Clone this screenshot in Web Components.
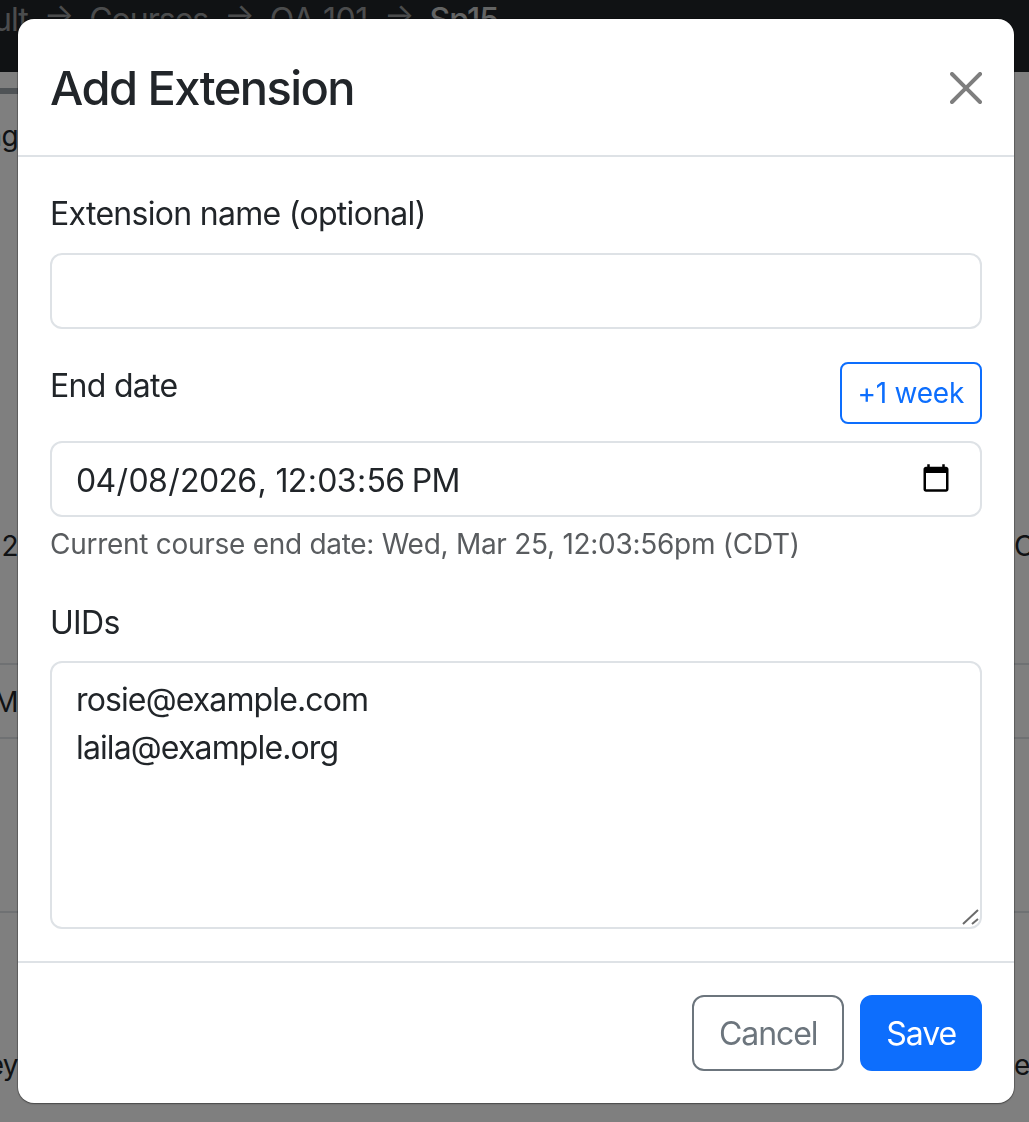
<!DOCTYPE html>
<html lang="en">
<head>
<meta charset="utf-8">
<title>Add Extension</title>
<style>
  html, body { margin: 0; height: 100%; overflow: hidden; background: #fff; }
  body { font: 32px/48px Inter, "Liberation Sans", sans-serif; color: #212529; }
  input::-webkit-calendar-picker-indicator { position: relative; top: -2px; }
</style>
</head>
<body>
<page-behind></page-behind>
<modal-backdrop></modal-backdrop>
<extension-modal>
  <span slot="title">Add Extension</span>
  <form-field label="Extension name (optional)" style="margin-bottom:33px;--label-top:1px">
    <input type="text" aria-label="Extension name">
  </form-field>
  <form-field label="End date" help="Current course end date: Wed, Mar 25, 12:03:56pm (CDT)">
    <ui-button slot="action" variant="small">+1 week</ui-button>
    <input type="datetime-local" step="1" value="2026-04-08T12:03:56" aria-label="End date">
  </form-field>
  <form-field label="UIDs" last grip style="--label-top:2px">
    <textarea rows="5" aria-label="UIDs">rosie@example.com
laila@example.org</textarea>
  </form-field>
  <ui-button slot="footer" variant="cancel">Cancel</ui-button>
  <ui-button slot="footer" variant="save">Save</ui-button>
</extension-modal>

<script>
class PageBehind extends HTMLElement {
  constructor() {
    super();
    this.attachShadow({mode: 'open'}).innerHTML = `
      <style>
        :host { display: block; height: 1122px; overflow: hidden; font: 32px/48px Inter, "Liberation Sans", sans-serif; color: #212529; }
        nav { height: 72px; background: #212529; color: rgba(255,255,255,.55); display: flex; gap: 16px; align-items: flex-start; white-space: nowrap; line-height: 40px; letter-spacing: -1px; overflow: hidden; }
        nav span:first-child { margin-left: -74px; }
        nav span:nth-of-type(3) { letter-spacing: -.4px; }
        nav i { font-style: normal; transform: translateY(-5px); }
        nav b { font-weight: 500; color: rgba(255,255,255,.75); }
        .tabs { height: 16px; background: #fff; }
        .active { height: 6px; width: 60px; background: #9fa6ad; }
        .row { display: grid; grid-template-columns: 18px 1fr 15px; border-bottom: 2px solid #dee2e6; box-sizing: border-box; overflow: hidden; font-size: 28px; line-height: 42px; letter-spacing: -.6px; }
        .row span { white-space: nowrap; display: flex; overflow: hidden; }
        .row span:first-child { justify-content: flex-end; }
      </style>
      <nav><span>Default</span><i>→</i><span>Courses</span><i>→</i><span>QA 101</span><i>→</i><b>Sp15</b></nav>
      <div class="tabs"></div>
      <div class="active"></div>
      <div class="row" style="height:84px;border:0;padding-top:21px"><span>ng</span><i></i><span></span></div>
      <div class="row" style="height:487px;padding-top:347px"><span>2</span><i></i><span>C</span></div>
      <div class="row" style="height:74px;padding-top:16px"><span>M</span><i></i><span></span></div>
      <div class="row" style="height:174px"><span></span><i></i><span></span></div>
      <div class="row" style="height:209px;border:0;padding-top:131px"><span>ey</span><i></i><span>er</span></div>
    `;
  }
}

class ModalBackdrop extends HTMLElement {
  constructor() {
    super();
    this.attachShadow({mode: 'open'}).innerHTML = `
      <style>
        :host { display: block; position: fixed; inset: 0; background: rgba(0,0,0,.5); }
      </style>
    `;
  }
}

class ExtensionModal extends HTMLElement {
  constructor() {
    super();
    this.attachShadow({mode: 'open'}).innerHTML = `
      <style>
        :host { display: block; position: fixed; left: 18px; top: 19px; width: 996px; box-sizing: border-box; background: #fff; border-radius: 16px; box-shadow: 0 0 0 1px rgba(0,0,0,.2), 0 1px 2px rgba(0,0,0,.3); }
        header { display: flex; align-items: center; justify-content: space-between; padding: 34px 32px 32px; border-bottom: 2px solid #dee2e6; }
        h1 { margin: 0; font-size: 47px; line-height: 70px; font-weight: 500; letter-spacing: -1.55px; color: #212529; }
        button { all: unset; width: 32px; height: 32px; display: block; opacity: .5; }
        svg { display: block; }
        main { padding: 32px; }
        footer { display: flex; justify-content: flex-end; gap: 16px; padding: 32px; border-top: 2px solid #dee2e6; }
      </style>
      <header>
        <h1><slot name="title"></slot></h1>
        <button aria-label="Close">
          <svg width="32" height="32" viewBox="0 0 16 16" fill="#000"><path d="M.293.293a1 1 0 0 1 1.414 0L8 6.586 14.293.293a1 1 0 1 1 1.414 1.414L9.414 8l6.293 6.293a1 1 0 0 1-1.414 1.414L8 9.414l-6.293 6.293a1 1 0 0 1-1.414-1.414L6.586 8 .293 1.707a1 1 0 0 1 0-1.414z"/></svg>
        </button>
      </header>
      <main><slot></slot></main>
      <footer><slot name="footer"></slot></footer>
    `;
  }
}

class FormField extends HTMLElement {
  constructor() {
    super();
    this.attachShadow({mode: 'open'});
  }
  connectedCallback() {
    const help = this.getAttribute('help');
    const grip = this.hasAttribute('grip');
    this.shadowRoot.innerHTML = `
      <style>
        :host { display: block; margin-bottom: 32px; }
        :host([last]) { margin-bottom: 0; }
        .top { display: flex; justify-content: space-between; align-items: flex-start; margin-bottom: 16px; }
        label { display: block; font-size: 32px; line-height: 48px; letter-spacing: -.7px; position: relative; top: var(--label-top, 0); }
        .control { position: relative; }
        .grip { position: absolute; right: 2px; bottom: 2px; }
        .help { margin-top: 6px; font-size: 28px; line-height: 42px; letter-spacing: -.28px; color: #595c5f; }
        ::slotted(input), ::slotted(textarea) {
          display: block; box-sizing: border-box; width: 100%; margin: 0;
          padding: 12px 24px; border: 2px solid #dee2e6; border-radius: 12px;
          font: 32px/48px Inter, "Liberation Sans", sans-serif; letter-spacing: -.6px;
          color: #212529; background: #fff; outline: none;
        }
        ::slotted(input[type=text]) { height: 76px; }
        ::slotted(input[type=datetime-local]) { height: 76px; padding: 14px 26px 10px 23px; letter-spacing: -.65px; }
        ::slotted(textarea) { resize: none; padding-top: 13px; padding-bottom: 11px; letter-spacing: -.87px; }
      </style>
      <div class="top"><label>${this.getAttribute('label')}</label><slot name="action"></slot></div>
      <div class="control">
        <slot></slot>
        ${grip ? `<svg class="grip" width="18" height="18" viewBox="0 0 18 18" fill="none" stroke="#6b6b6b" stroke-width="2"><path d="M1 15 16 1M10 15l6-5"/></svg>` : ''}
      </div>
      ${help ? `<div class="help">${help}</div>` : ''}
    `;
  }
}

class UiButton extends HTMLElement {
  constructor() {
    super();
    this.attachShadow({mode: 'open'}).innerHTML = `
      <style>
        :host { display: inline-block; box-sizing: border-box; border: 2px solid; border-radius: 12px; padding: 13px 24px 11px; font-size: 32px; line-height: 48px; letter-spacing: -1.1px; white-space: nowrap; cursor: pointer; }
        :host([variant=small]) { font-size: 28px; line-height: 42px; padding: 8px 16px; margin-bottom: 1px; border-radius: 8px; color: #0d6efd; border-color: #0d6efd; letter-spacing: -.25px; }
        :host([variant=cancel]) { padding-left: 25px; padding-right: 25px; color: #6c757d; border-color: #6c757d; }
        :host([variant=save]) { color: #fff; background: #0d6efd; border-color: #0d6efd; }
      </style>
      <slot></slot>
    `;
  }
}

customElements.define('page-behind', PageBehind);
customElements.define('modal-backdrop', ModalBackdrop);
customElements.define('extension-modal', ExtensionModal);
customElements.define('form-field', FormField);
customElements.define('ui-button', UiButton);
</script>
</body>
</html>
